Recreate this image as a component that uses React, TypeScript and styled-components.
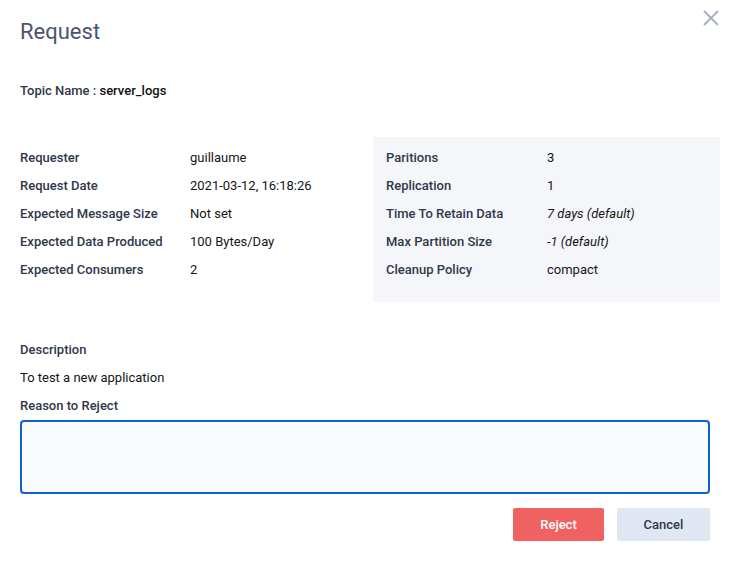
import React, { FC } from "react";
import styled, { createGlobalStyle } from "styled-components";

const GlobalStyle = createGlobalStyle`
  html, body {
    margin: 0;
    padding: 0;
    background: #fff;
    font-family: Roboto, "Liberation Sans", sans-serif;
  }
`;

type Row = { label: string; value: string; italic?: boolean };

const requestRows: Row[] = [
  { label: "Requester", value: "guillaume" },
  { label: "Request Date", value: "2021-03-12, 16:18:26" },
  { label: "Expected Message Size", value: "Not set" },
  { label: "Expected Data Produced", value: "100 Bytes/Day" },
  { label: "Expected Consumers", value: "2" },
];

const topicRows: Row[] = [
  { label: "Paritions", value: "3" },
  { label: "Replication", value: "1" },
  { label: "Time To Retain Data", value: "7 days (default)", italic: true },
  { label: "Max Partition Size", value: "-1 (default)", italic: true },
  { label: "Cleanup Policy", value: "compact" },
];

const App: FC = () => {
  return (
    <>
      <GlobalStyle />
      <Modal>
        <CloseButton aria-label="close">
          <svg width="16" height="16" viewBox="0 0 16 16">
            <path d="M1 1L15 15M15 1L1 15" stroke="#a7aec4" strokeWidth="1.8" />
          </svg>
        </CloseButton>

        <Title>{"Request"}</Title>

        <TopicLine>
          {"Topic Name : "}
          <TopicValue>{"server_logs"}</TopicValue>
        </TopicLine>

        <Details>
          <Column labelWidth={170}>
            {requestRows.map(row => (
              <React.Fragment key={row.label}>
                <Label>{row.label}</Label>
                <Value italic={row.italic}>{row.value}</Value>
              </React.Fragment>
            ))}
          </Column>
          <Column labelWidth={161} shaded>
            {topicRows.map(row => (
              <React.Fragment key={row.label}>
                <Label>{row.label}</Label>
                <Value italic={row.italic}>{row.value}</Value>
              </React.Fragment>
            ))}
          </Column>
        </Details>

        <Section>
          <Label>{"Description"}</Label>
          <Value>{"To test a new application"}</Value>
          <Label>{"Reason to Reject"}</Label>
          <ReasonInput />
        </Section>

        <Actions>
          <RejectButton>{"Reject"}</RejectButton>
          <CancelButton>{"Cancel"}</CancelButton>
        </Actions>
      </Modal>
    </>
  );
};

export default App;

const Modal = styled.div`
  position: relative;
  width: 730px;
  height: 563px;
  box-sizing: border-box;
  padding: 17px 10px 0 20px;
`;

const CloseButton = styled.div`
  position: absolute;
  top: 10px;
  right: 11px;
  width: 16px;
  height: 16px;
  display: flex;
`;

const Title = styled.div`
  font-size: 22px;
  line-height: 30px;
  font-weight: 400;
  color: #4a5470;
`;

const TopicLine = styled.div`
  margin-top: 30px;
  font-size: 13px;
  line-height: 28px;
  font-weight: 500;
  color: #30374b;
`;

const TopicValue = styled.span`
  color: #111;
`;

const Details = styled.div`
  margin-top: 32px;
  display: grid;
  grid-template-columns: 353px 347px;
  height: 165px;
`;

const Column = styled.div<{ labelWidth: number; shaded?: boolean }>`
  display: grid;
  grid-template-columns: ${p => p.labelWidth}px 1fr;
  grid-auto-rows: 28px;
  align-content: start;
  padding: 7px 0 0 ${p => (p.shaded ? 13 : 0)}px;
  background: ${p => (p.shaded ? "#f5f6fa" : "transparent")};
`;

const Label = styled.div`
  font-size: 13px;
  line-height: 28px;
  font-weight: 500;
  color: #30374b;
`;

const Value = styled.div<{ italic?: boolean }>`
  font-size: 13px;
  line-height: 28px;
  color: #151515;
  font-style: ${p => (p.italic ? "italic" : "normal")};
`;

const Section = styled.div`
  margin-top: 34px;
  display: flex;
  flex-direction: column;
`;

const ReasonInput = styled.textarea`
  width: 690px;
  height: 74px;
  box-sizing: border-box;
  border: 2px solid #0d62c9;
  border-radius: 4px;
  background: #fafbfd;
  resize: none;
  outline: none;
  font-family: inherit;
`;

const Actions = styled.div`
  margin-top: 14px;
  width: 690px;
  display: flex;
  justify-content: flex-end;
  gap: 13px;
`;

const Button = styled.button`
  height: 33px;
  border: none;
  border-radius: 2px;
  font-family: inherit;
  font-size: 13px;
  font-weight: 500;
  cursor: pointer;
`;

const RejectButton = styled(Button)`
  width: 91px;
  background: #f06262;
  color: #fff;
`;

const CancelButton = styled(Button)`
  width: 93px;
  background: #e1e6f3;
  color: #30374b;
`;
